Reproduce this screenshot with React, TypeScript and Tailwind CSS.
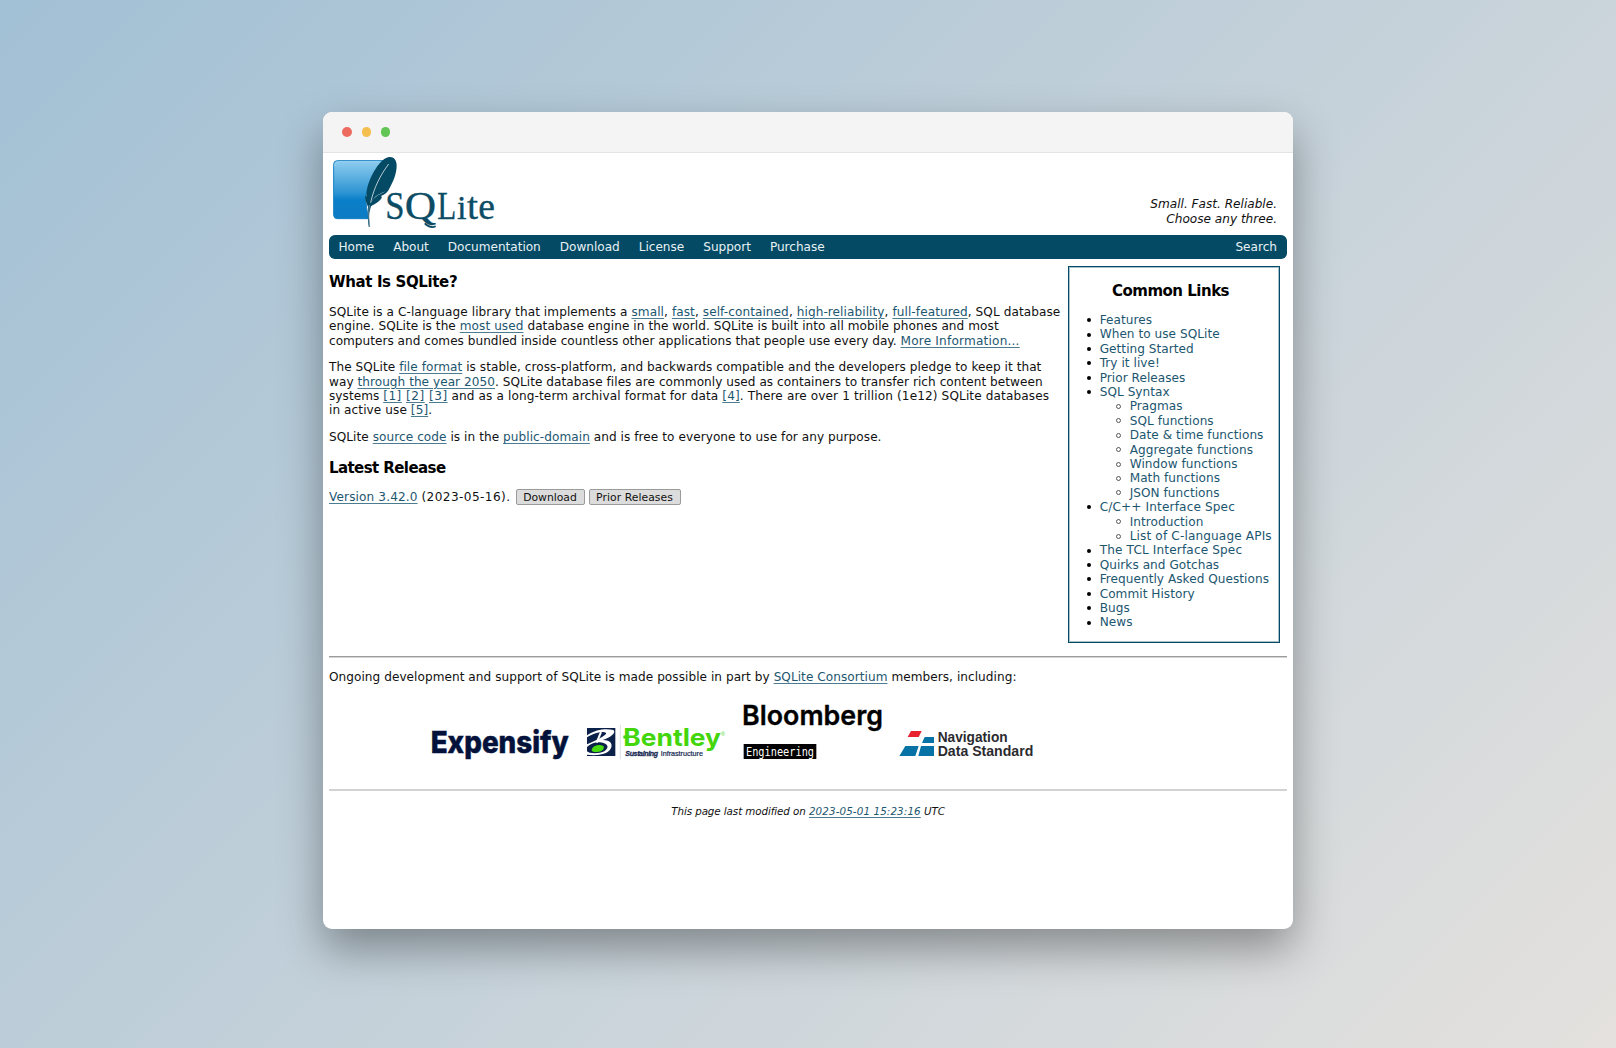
import React from "react";

function A({ children }: { children: React.ReactNode }) {
  return (
    <a className="text-[#1c566f] underline decoration-[#4c7c90] decoration-1 underline-offset-[1.5px]">{children}</a>
  );
}

function Logo() {
  return (
    <svg className="h-[82px] w-[180px]" viewBox="39 159 540 246">
      <defs>
        <linearGradient id="sq" x1="0" y1="0" x2="0" y2="1">
          <stop offset="0" stopColor="#8fcdf0" />
          <stop offset="0.55" stopColor="#2e95d3" />
          <stop offset="0.68" stopColor="#0a7fc9" />
          <stop offset="1" stopColor="#0c7cc4" />
        </linearGradient>
      </defs>
      <path
        d="M82 182 H222 C195 210 176 245 168 285 C166 310 172 335 175 356 H82 Q71 356 71 345 V193 Q71 182 82 182Z"
        fill="url(#sq)"
        stroke="#1580c4"
        strokeWidth="3"
      />
      <path d="M74 200 Q74 185 86 185 H208" fill="none" stroke="#a5d8f4" strokeWidth="2" />
      <path
        d="M240 171 C252 171 260 181 260 196 C260 222 250 244 237 268 C230 281 221 285 213 288 C217 291 216 294 211 299 C201 310 190 313 183 319 L178 338 C176 352 178 366 180 380 L176 380 C173 360 173 338 174 320 C168 308 164 296 166 286 L169 290 C169 262 180 232 197 206 C210 187 224 171 240 171Z"
        fill="#044a64"
      />
      <path d="M236 192 C212 224 191 264 182 308" fill="none" stroke="#fff" strokeWidth="2.5" opacity="0.85" />
      <path d="M182 312 C188 296 198 284 228 274 C214 280 204 285 196 292 C190 297 186 302 182 312Z" fill="#fff" />
      <path d="M178 315 C175 338 176 360 179 380" fill="none" stroke="#7a98a6" strokeWidth="2.5" />
      <g fill="#0c4c65" stroke="#0c4c65" strokeWidth="1" fontFamily="Liberation Serif, serif">
        <text x="226" y="358" fontSize="121" textLength="58" lengthAdjust="spacingAndGlyphs">S</text>
        <text x="284" y="358" fontSize="121" textLength="94" lengthAdjust="spacingAndGlyphs">Q</text>
        <text x="382" y="358" fontSize="121" textLength="57" lengthAdjust="spacingAndGlyphs">L</text>
        <text x="441" y="358" fontSize="103">i</text>
        <text x="471" y="358" fontSize="112" textLength="33" lengthAdjust="spacingAndGlyphs">t</text>
        <text x="505" y="358" fontSize="112" textLength="50" lengthAdjust="spacingAndGlyphs">e</text>
      </g>
      <path d="M344 370 C354 380 366 384 377 379" fill="none" stroke="#0c4c65" strokeWidth="5" />
    </svg>
  );
}

function Expensify() {
  return (
    <svg className="h-[62px] w-[140px] overflow-visible" viewBox="30 30 420 186">
      <text x="32" y="190" fontFamily="Inter, sans-serif" fontWeight="800" fontSize="90" fill="#03123a" stroke="#03123a" strokeWidth="1.5" textLength="414" lengthAdjust="spacingAndGlyphs">
        Expensify
      </text>
    </svg>
  );
}

function Bentley() {
  return (
    <svg className="ml-4 h-[62px] w-[140px] overflow-visible" viewBox="498 30 420 186">
      <rect x="501" y="114" width="85" height="84" fill="#0b2149" />
      <path
        d="M501 136 C530 116 560 115 580 120 C590 128 572 143 548 150 C574 150 580 165 571 178 C560 194 530 198 501 194 V184 C506 192 540 192 553 184 C570 172 564 160 540 157 C525 156 511 162 501 171 V163 C520 154 548 143 558 132 C562 122 530 124 501 142Z"
        fill="#fff"
      />
      <path d="M543 126 L530 158" stroke="#fff" strokeWidth="6" />
      <path d="M516 176 C522 164 540 162 550 168 C556 176 545 186 531 186 C520 186 512 184 516 176Z" fill="#48dc10" />
      <path d="M601 105 V207" stroke="#c9ced6" strokeWidth="2" />
      <path d="M610 141 H626" stroke="#44d60c" strokeWidth="9" />
      <text x="610" y="169" fontFamily="Inter, sans-serif" fontWeight="700" fontSize="72" fill="#44d60c" textLength="293" lengthAdjust="spacingAndGlyphs">
        Bentley
      </text>
      <text x="903" y="139" fontFamily="Liberation Sans, sans-serif" fontSize="16" fill="#44d60c">®</text>
      <text x="616" y="198" fontFamily="Liberation Sans, sans-serif" fontWeight="700" fontStyle="italic" fontSize="21" fill="#14264f" stroke="#14264f" strokeWidth="0.8" textLength="98">
        Sustaining
      </text>
      <text x="722" y="198" fontFamily="Liberation Sans, sans-serif" fontSize="21" fill="#14264f" stroke="#14264f" strokeWidth="0.6" textLength="127" lengthAdjust="spacingAndGlyphs">
        Infrastructure
      </text>
    </svg>
  );
}

function Bloomberg() {
  return (
    <svg className="ml-4 h-[62px] w-[142px] overflow-visible" viewBox="36 30 426 186">
      <text x="36" y="104" fontFamily="Inter, sans-serif" fontWeight="600" fontSize="83" fill="#000" stroke="#000" strokeWidth="1" textLength="423" lengthAdjust="spacingAndGlyphs">
        Bloomberg
      </text>
      <rect x="41" y="162" width="218" height="45" fill="#000" />
      <text x="48" y="198" fontFamily="DejaVu Sans Mono, monospace" fontSize="36" fill="#fff" textLength="204" lengthAdjust="spacingAndGlyphs">
        Engineering
      </text>
    </svg>
  );
}

function NavigationData() {
  return (
    <svg className="ml-[14px] h-[62px] w-[136px] overflow-visible" viewBox="504 30 408 186">
      <path d="M543 123 H575 L566 141 H533Z" fill="#e8222e" />
      <path d="M584 141 H612 V159 H576Z" fill="#0672a5" />
      <path d="M526 168 H566 L556 198 H508Z" fill="#0672a5" />
      <path d="M573 168 H612 V198 H565Z" fill="#0672a5" />
      <g fontFamily="Liberation Sans, sans-serif" fontWeight="700" fill="#2b2b2f">
        <text x="623" y="157" fontSize="42" textLength="210" lengthAdjust="spacingAndGlyphs">Navigation</text>
        <text x="623" y="197" fontSize="42" textLength="287" lengthAdjust="spacingAndGlyphs">Data Standard</text>
      </g>
    </svg>
  );
}

const links: { label: string; sub?: boolean }[] = [
  { label: "Features" },
  { label: "When to use SQLite" },
  { label: "Getting Started" },
  { label: "Try it live!" },
  { label: "Prior Releases" },
  { label: "SQL Syntax" },
  { label: "Pragmas", sub: true },
  { label: "SQL functions", sub: true },
  { label: "Date & time functions", sub: true },
  { label: "Aggregate functions", sub: true },
  { label: "Window functions", sub: true },
  { label: "Math functions", sub: true },
  { label: "JSON functions", sub: true },
  { label: "C/C++ Interface Spec" },
  { label: "Introduction", sub: true },
  { label: "List of C-language APIs", sub: true },
  { label: "The TCL Interface Spec" },
  { label: "Quirks and Gotchas" },
  { label: "Frequently Asked Questions" },
  { label: "Commit History" },
  { label: "Bugs" },
  { label: "News" },
];

const menu = ["Home", "About", "Documentation", "Download", "License", "Support", "Purchase"];

export default function App() {
  return (
    <div className="h-[1048px] w-[1616px] overflow-hidden bg-[linear-gradient(135deg,#a2c0d5,#e4e1de)] pt-[112px] pl-[323px]">
      <div className="h-[817px] w-[970px] overflow-hidden rounded-[9px] bg-white font-['Verdana','DejaVu_Sans',sans-serif] text-[12.1px] leading-[14.4px] whitespace-nowrap text-[#111] shadow-[0_20px_44px_rgba(0,0,0,0.36)]">
        <div className="flex h-[41px] items-center gap-[9.5px] border-b border-[#e4e4e4] bg-[#f4f4f4] pl-[19px]">
          <span className="size-[10px] rounded-full bg-[#ed6a5e]" />
          <span className="size-[9.5px] rounded-full bg-[#f5bf4f]" />
          <span className="size-[9.5px] rounded-full bg-[#61c554]" />
        </div>

        <header className="flex h-[82px] justify-between pr-4">
          <Logo />
          <div className="pt-[44.4px] text-right italic">
            Small. Fast. Reliable.
            <br />
            Choose any three.
          </div>
        </header>

        <nav className="mx-[6px] flex h-[24px] items-center gap-[19px] rounded-[6px] bg-[#044a64] pr-[10px] pl-[9.5px] tracking-[-0.02px] text-[#e8f1f4]">
          {menu.map((m) => (
            <span key={m}>{m}</span>
          ))}
          <span className="ml-auto tracking-normal">Search</span>
        </nav>

        <div className="flex pl-[6px]">
          <main className="w-[739px] pt-[14px]">
            <h3 className="text-[15px] leading-[18px] font-bold tracking-[-0.37px] text-black">What Is SQLite?</h3>
            <p className="mt-[13.9px]">
              <span className="tracking-[0.074px]">
                SQLite is a C-language library that implements a <A>small</A>, <A>fast</A>, <A>self-contained</A>,{" "}
                <A>high-reliability</A>, <A>full-featured</A>, SQL database
              </span>
              <br />
              <span className="tracking-[0.06px]">
                engine. SQLite is the <A>most used</A> database engine in the world. SQLite is built into all mobile
                phones and most
              </span>
              <br />
              <span className="tracking-[0.015px]">
                computers and comes bundled inside countless other applications that people use every day.{" "}
                <span className="tracking-[0.2px]">
                  <A>More Information...</A>
                </span>
              </span>
            </p>
            <p className="mt-[12.1px]">
              <span className="tracking-[0.045px]">
                The SQLite <A>file format</A> is stable, cross-platform, and backwards compatible and the developers
                pledge to keep it that
              </span>
              <br />
              <span className="tracking-[0.038px]">
                way <A>through the year 2050</A>. SQLite database files are commonly used as containers to transfer
                rich content between
              </span>
              <br />
              <span className="tracking-[0.04px]">
                systems{" "}
                <span className="tracking-[0.48px]">
                  <A>[1]</A> <A>[2]</A> <A>[3]</A>
                </span>{" "}
                <span className="tracking-[0.115px]">
                  and as a long-term archival format for data <A>[4]</A>. There are over 1 trillion (1e12) SQLite
                  databases
                </span>
              </span>
              <br />
              <span className="tracking-[0.08px]">
                in active use <A>[5]</A>.
              </span>
            </p>
            <p className="mt-[12.3px] tracking-[0.057px]">
              SQLite <A>source code</A> is in the <A>public-domain</A> and is free to everyone to use for any purpose.
            </p>
            <h3 className="mt-[14px] text-[15px] leading-[18px] font-bold tracking-[-0.58px] text-black">
              Latest Release
            </h3>
            <div className="mt-[12px] flex h-[17px] items-center">
              <span>
                <span className="tracking-[0.13px]">
                  <A>Version 3.42.0</A>
                </span>{" "}
                <span className="tracking-[0.42px]">(2023-05-16).</span>
              </span>
              <button className="ml-[5px] h-[16px] w-[69px] rounded-[2px] border border-[#9b9b9b] bg-[#dcdcdc] text-[10.8px] leading-[13px]">
                Download
              </button>
              <button className="ml-1 h-[16px] w-[92px] rounded-[2px] border border-[#9b9b9b] bg-[#dcdcdc] text-[10.8px] leading-[13px] tracking-[0.06px]">
                Prior Releases
              </button>
            </div>
          </main>

          <aside className="mt-[7px] h-[377px] w-[212px] border border-[#044a64] shadow-[inset_0_0_0_1px_rgba(4,74,100,0.35)]">
            <h3 className="mt-[14.6px] pr-[7px] text-center text-[15px] leading-[18px] font-bold tracking-[-0.5px] text-black">
              Common Links
            </h3>
            <ul className="mt-[13.3px] pl-[17.7px] text-[#1c566f]">
              {links.map((l) => (
                <li key={l.label} className={l.sub ? "flex items-center pl-[29px]" : "flex items-center"}>
                  <span
                    className={
                      l.sub
                        ? "mr-[9px] size-[5px] rounded-full border border-[#555]"
                        : "mr-[9px] size-[4px] rounded-full bg-black"
                    }
                  />
                  <span className={l.label.includes("Spec") || l.label.includes("APIs") ? "tracking-[0.14px]" : "tracking-[0.04px]"}>
                    {l.label}
                  </span>
                </li>
              ))}
            </ul>
          </aside>
        </div>

        <hr className="mx-[6px] mt-[13px] border-t border-b border-t-[#9b9b9b] border-b-[#d4d4d4]" />
        <p className="mx-[6px] mt-[12px] tracking-[0.047px]">
          Ongoing development and support of SQLite is made possible in part by <A>SQLite Consortium</A> members,
          including:
        </p>
        <div className="mt-[15.6px] flex pl-[107px]">
          <Expensify />
          <Bentley />
          <Bloomberg />
          <NavigationData />
        </div>
        <hr className="mx-[6px] mt-[27px] h-[2px] border-0 bg-[#d2d2d2]" />
        <p className="mt-[13px] text-center text-[10.3px] tracking-[-0.07px] italic">
          This page last modified on{" "}
          <span className="tracking-[0.13px]">
            <A>2023-05-01 15:23:16</A>
          </span>{" "}
          <span>UTC</span>
        </p>
      </div>
    </div>
  );
}
